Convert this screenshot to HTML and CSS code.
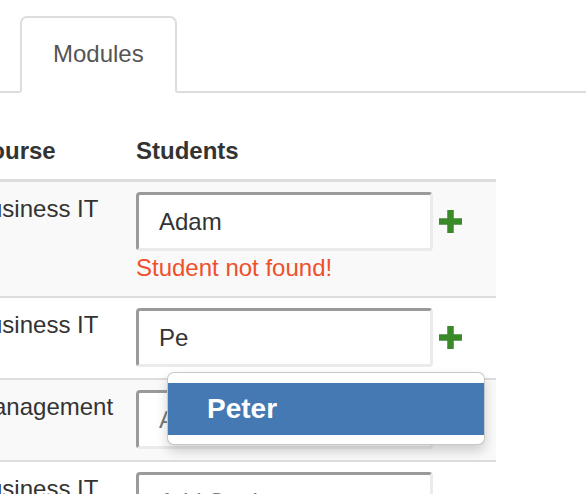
FILE: index.html
```html
<!DOCTYPE html>
<html lang="en">
<head>
<meta charset="utf-8">
<title>Modules</title>
<link rel="stylesheet" href="styles.css">
</head>
<body>
<div class="tabs">
  <div class="tab">Modules</div>
</div>
<div class="table-wrap">
  <table class="modules">
    <thead>
      <tr><th class="col-course">Course</th><th class="col-students">Students</th></tr>
    </thead>
    <tbody>
      <tr class="striped">
        <td>Business IT</td>
        <td>
          <div class="student-field">
            <input class="student-input" type="text" value="Adam" placeholder="Add Student">
            <span class="add-btn"><svg viewBox="0 0 23 23" width="23" height="23"><rect x="0" y="8.25" width="23" height="6.5"/><rect x="8.25" y="0" width="6.5" height="23"/></svg></span>
          </div>
          <div class="error">Student not found!</div>
        </td>
      </tr>
      <tr>
        <td>Business IT</td>
        <td>
          <div class="student-field">
            <input class="student-input" type="text" value="Pe" placeholder="Add Student">
            <span class="add-btn"><svg viewBox="0 0 23 23" width="23" height="23"><rect x="0" y="8.25" width="23" height="6.5"/><rect x="8.25" y="0" width="6.5" height="23"/></svg></span>
            <ul class="suggestions">
              <li class="suggestion active">Peter</li>
            </ul>
          </div>
        </td>
      </tr>
      <tr class="striped">
        <td>Management</td>
        <td>
          <div class="student-field">
            <input class="student-input" type="text" placeholder="Add Student">
          </div>
        </td>
      </tr>
      <tr>
        <td>Business IT</td>
        <td>
          <div class="student-field">
            <input class="student-input" type="text" placeholder="Add Student">
          </div>
        </td>
      </tr>
    </tbody>
  </table>
</div>
</body>
</html>
```
FILE: styles.css
```css
html, body {
  margin: 0;
  padding: 0;
  overflow: hidden;
  background: #fff;
}
body {
  font-family: "Liberation Sans", Arial, sans-serif;
  font-size: 24px;
  line-height: 1.42857;
  color: #333;
}
.tabs {
  display: flex;
  padding: 16px 0 0 20px;
  border-bottom: 2px solid #ddd;
}
.tab {
  border: 2px solid #ddd;
  border-bottom-color: transparent;
  border-radius: 7px 7px 0 0;
  background: #fff;
  margin-bottom: -2px;
  padding: 19px 31px 20px;
  color: #555;
}
.table-wrap {
  margin: 30px 0 0 -38px;
}
.modules {
  width: 534px;
  border-collapse: collapse;
  border-spacing: 0;
}
.modules th {
  text-align: left;
  font-weight: bold;
  padding: 10.5px 11px;
  vertical-align: bottom;
  border-bottom: 3px solid #ddd;
}
.col-course {
  width: 141px;
}
.col-students {
  padding-left: 10px;
}
.modules td {
  padding: 10.5px 11px;
  vertical-align: top;
  border-top: 2px solid #ddd;
}
.modules tr.striped td {
  background: #f9f9f9;
}
.student-field {
  position: relative;
  display: flex;
  align-items: center;
  gap: 6px;
  min-height: 59px;
}
.student-input {
  box-sizing: border-box;
  width: 297px;
  height: 59px;
  margin: 0;
  padding: 0 0 0 20px;
  border: 3px solid;
  border-color: #9a9a9a #ebebeb #ebebeb #9a9a9a;
  border-radius: 4px;
  background: #fff;
  font-family: inherit;
  font-size: 24px;
  color: #333;
  outline: none;
}
.student-input::placeholder {
  color: #777;
}
.add-btn {
  display: flex;
  width: 23px;
  height: 23px;
}
.add-btn svg {
  fill: #3a8a2a;
}
.error {
  color: #ef4f2b;
  line-height: 28px;
  padding-top: 3px;
  margin-bottom: 3px;
}
.suggestions {
  position: absolute;
  z-index: 10;
  left: 31px;
  top: 64px;
  width: 316px;
  margin: 0;
  padding: 10px 0 9px;
  list-style: none;
  background: #fff;
  border: 1px solid rgba(0, 0, 0, 0.22);
  border-radius: 7px;
  box-shadow: 0 6px 12px rgba(0, 0, 0, 0.175);
}
.suggestion {
  height: 52px;
  line-height: 52px;
  padding-left: 39px;
  font-size: 28px;
  font-weight: bold;
  color: #333;
}
.suggestion.active {
  background: #4479b3;
  color: #fff;
}
```
